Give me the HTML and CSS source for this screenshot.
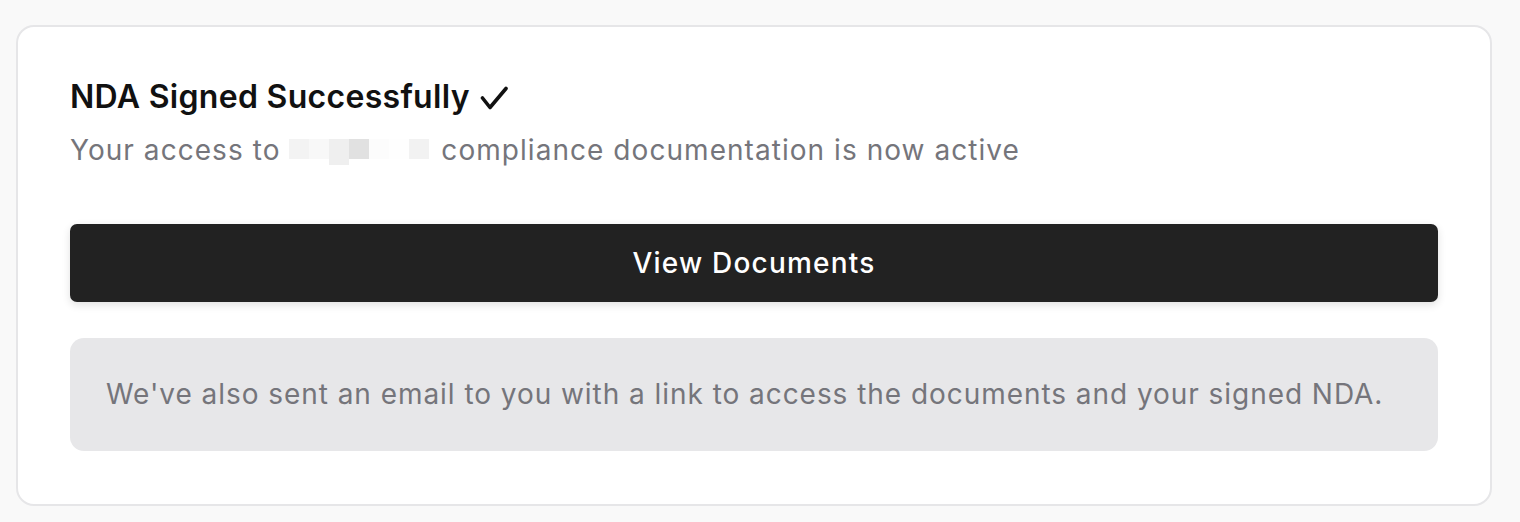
FILE: index.html
```html
<!DOCTYPE html>
<html lang="en">
<head>
<meta charset="utf-8">
<title>NDA Signed</title>
<link rel="stylesheet" href="styles.css">
</head>
<body>
<div class="card">
  <h1 class="title">NDA Signed Successfully <svg class="check" width="28" height="24" viewBox="0 0 28 24" aria-label="✓"><polyline points="2.5,12 10,21.5 26,2.5" fill="none" stroke="#111111" stroke-width="3.6" stroke-linecap="round" stroke-linejoin="round"/></svg></h1>
  <p class="subtitle">Your access to <span class="redact"><span class="r r1"></span><span class="r r2"></span><span class="r r3"></span><span class="r r4"></span><span class="r r5"></span><span class="r r6"></span><span class="r r7"></span></span> compliance documentation is now active</p>
  <button class="btn">View Documents</button>
  <div class="note">We've also sent an email to you with a link to access the documents and your signed NDA.</div>
</div>
</body>
</html>
```

FILE: styles.css
```css
html, body {
  margin: 0;
  background: #f9f9f9;
}
body {
  padding: 25px 0 0 16px;
  font-family: Inter, "Noto Sans", sans-serif;
}
.card {
  box-sizing: border-box;
  width: 1476px;
  background: #ffffff;
  border: 2px solid #e6e6e8;
  border-radius: 18px;
  padding: 52px 52px 53px 52px;
}
.title {
  margin: 0;
  font-size: 32px;
  line-height: 36px;
  font-weight: 600;
  color: #111111;
  letter-spacing: 0.3px;
}
.check {
  display: inline-block;
  vertical-align: baseline;
  margin-left: 2px;
  position: relative;
  top: 2px;
}
.subtitle {
  margin: 17px 0 0;
  font-size: 28px;
  line-height: 36px;
  color: #75757b;
  letter-spacing: 1.05px;
}
.redact {
  display: inline-flex;
  vertical-align: middle;
  position: relative;
  top: -3px;
  height: 20px;
  margin-right: 3px;
}
.r {
  display: block;
  width: 20px;
  height: 20px;
}
.r1 { background: #f3f3f3; }
.r2 { background: #f8f8f8; }
.r3 { background: #efefef; height: 26px; }
.r4 { background: #e1e1e1; }
.r5 { background: #fcfcfc; }
.r6 { background: #fefefe; }
.r7 { background: #f2f2f2; }
.btn {
  display: block;
  width: 100%;
  height: 78px;
  margin-top: 56px;
  border: none;
  border-radius: 7px;
  background: #222222;
  color: #ffffff;
  font-family: Inter, "Noto Sans", sans-serif;
  font-size: 28px;
  font-weight: 500;
  letter-spacing: 1.2px;
  box-shadow: 0 3px 8px rgba(0, 0, 0, 0.12);
}
.note {
  margin-top: 36px;
  background: #e7e7e9;
  border-radius: 14px;
  padding: 36px 36px;
  font-size: 28px;
  line-height: 41px;
  color: #75757b;
  letter-spacing: 0.95px;
}
```
